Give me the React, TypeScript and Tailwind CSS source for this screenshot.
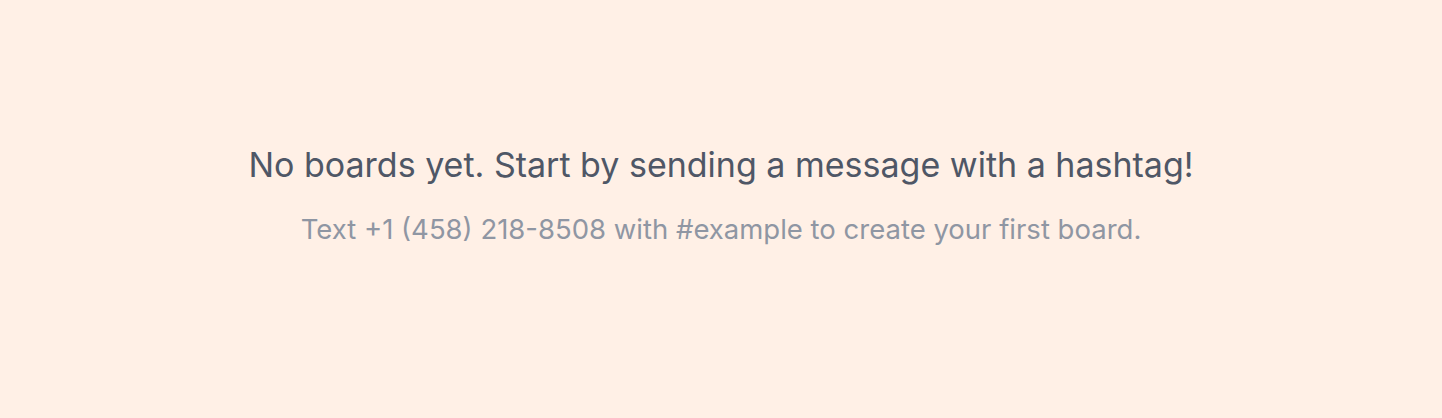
export default function App() {
  return (
    <div className="w-full h-[418px] bg-[#fff0e6] flex flex-col items-center justify-center pb-[26px] font-['Inter',sans-serif]">
      <h2 className="text-[34px] leading-[40px] text-[#4f5766] mb-[26px]">No boards yet. Start by sending a message with a hashtag!</h2>
      <p className="text-[27.5px] leading-[36px] text-[#8f96a3]">Text +1 (458) 218-8508 with #example to create your first board.</p>
    </div>
  );
}
